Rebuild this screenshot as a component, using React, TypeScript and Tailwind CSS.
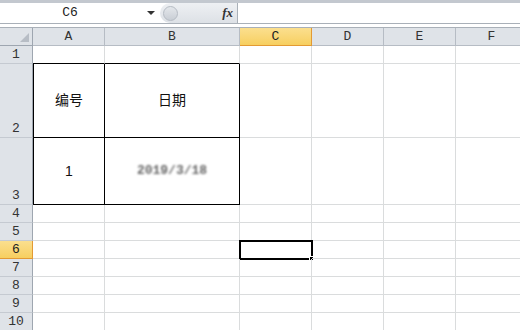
import React from "react"

const cols = [
	{ label: "A", w: "w-[72px]" },
	{ label: "B", w: "w-[135px]" },
	{ label: "C", w: "w-[72px]" },
	{ label: "D", w: "w-[72px]" },
	{ label: "E", w: "w-[72px]" },
	{ label: "F", w: "w-[72px]" },
]

const rows = [
	{ n: 1, h: "h-[18px]" },
	{ n: 2, h: "h-[74px]" },
	{ n: 3, h: "h-[67px]" },
	{ n: 4, h: "h-[18px]" },
	{ n: 5, h: "h-[18px]" },
	{ n: 6, h: "h-[18px]" },
	{ n: 7, h: "h-[18px]" },
	{ n: 8, h: "h-[18px]" },
	{ n: 9, h: "h-[18px]" },
	{ n: 10, h: "h-[18px]" },
]

const mono = "font-['Liberation_Mono','DejaVu_Sans_Mono',monospace]"
const cjk = "font-['Liberation_Sans','Noto_Sans_CJK_SC',sans-serif]"

function Cell({ row, col }: { row: number; col: number }) {
	const inTable = (row === 2 || row === 3) && (col === 0 || col === 1)
	const aboveTable = row === 1 && (col === 0 || col === 1)
	const selected = row === 6 && col === 2
	let content: React.ReactNode = null
	if (row === 2 && col === 0) content = "编号"
	if (row === 2 && col === 1) content = "日期"
	if (row === 3 && col === 0) content = "1"
	if (row === 3 && col === 1)
		content = (
			<span className="font-['Liberation_Mono',monospace] text-[13px] font-bold text-[#666] blur-[1.3px]">
				2019/3/18
			</span>
		)

	return (
		<div
			className={
				"relative flex shrink-0 items-center justify-center text-[14px] text-[#111] " +
				cjk +
				" " +
				cols[col].w +
				" " +
				(inTable
					? "border-r border-b border-black"
					: aboveTable
						? "border-r border-b border-r-[#dadcdd] border-b-black"
						: "border-r border-b border-[#dadcdd]") +
				(inTable && col === 0 ? " border-l border-l-black" : "")
			}
		>
			{content}
			{selected && (
				<div className="absolute -top-px -left-px h-[20px] w-[74px] border-2 border-black">
					<div className="absolute -right-[3px] -bottom-[3px] h-[5px] w-[5px] border border-white bg-black" />
				</div>
			)}
		</div>
	)
}

export default function App() {
	return (
		<div className="h-[330px] w-[520px] overflow-hidden bg-white">
			<div className="h-[3px] bg-[#c3c8cf]" />
			{/* formula bar */}
			<div className="flex h-[21px] border-b border-[#a9b0b8] bg-white">
				<div className="relative flex w-[160px] items-center">
					<span className={"w-[140px] text-center text-[13px] text-[#222] " + mono}>C6</span>
					<span className="absolute left-[147px] top-[8px] h-0 w-0 border-x-[4px] border-t-[4px] border-x-transparent border-t-[#333]" />
				</div>
				<div className="flex w-[78px] items-center rounded-l-full border-r border-[#a9b0b8] bg-gradient-to-b from-[#eef0f3] to-[#dde1e6]">
					<div className="ml-[3px] h-[15px] w-[15px] rounded-full border border-[#b5bbc3] bg-gradient-to-b from-[#e4e7eb] to-[#c9ced5]" />
					<span className="ml-auto mr-[4px] font-['Liberation_Serif',serif] text-[13px] font-bold italic text-[#333]">
						fx
					</span>
				</div>
				<div className="flex-1" />
			</div>
			<div className="h-[4px] border-b border-[#a9b0b8] bg-white" />
			{/* column headers */}
			<div className="flex h-[18px] bg-[#dfe3e8]">
				<div className="relative w-[33px] shrink-0 border-r border-b border-[#9ea6b0]">
					<span className="absolute right-[3px] bottom-[3px] h-0 w-0 border-l-[9px] border-b-[9px] border-l-transparent border-b-[#b7bdc5]" />
				</div>
				{cols.map((c) => (
					<div
						key={c.label}
						className={
							"flex shrink-0 items-center justify-center text-[13px] " +
							mono +
							" " +
							c.w +
							" " +
							(c.label === "C"
								? "border-r border-b border-[#e39a33] bg-gradient-to-b from-[#fbdf8e] to-[#f7cf5f] text-[#222]"
								: "border-r border-b border-[#b6bcc4] text-[#333]")
						}
					>
						{c.label}
					</div>
				))}
			</div>
			{rows.map((r) => (
				<div key={r.n} className={"flex " + r.h}>
					<div
						className={
							"flex w-[33px] shrink-0 items-end justify-center pb-[1px] text-[13px] leading-[15px] " +
							mono +
							" " +
							(r.n === 6
								? "border-r border-b border-[#e39a33] bg-gradient-to-b from-[#fbdf8e] to-[#f7cf5f] text-[#222]"
								: "border-r border-b border-r-[#9ea6b0] border-b-[#c5cad1] bg-[#dfe3e8] text-[#333]")
						}
					>
						{r.n}
					</div>
					{cols.map((c, i) => (
						<Cell key={c.label} row={r.n} col={i} />
					))}
				</div>
			))}
		</div>
	)
}
